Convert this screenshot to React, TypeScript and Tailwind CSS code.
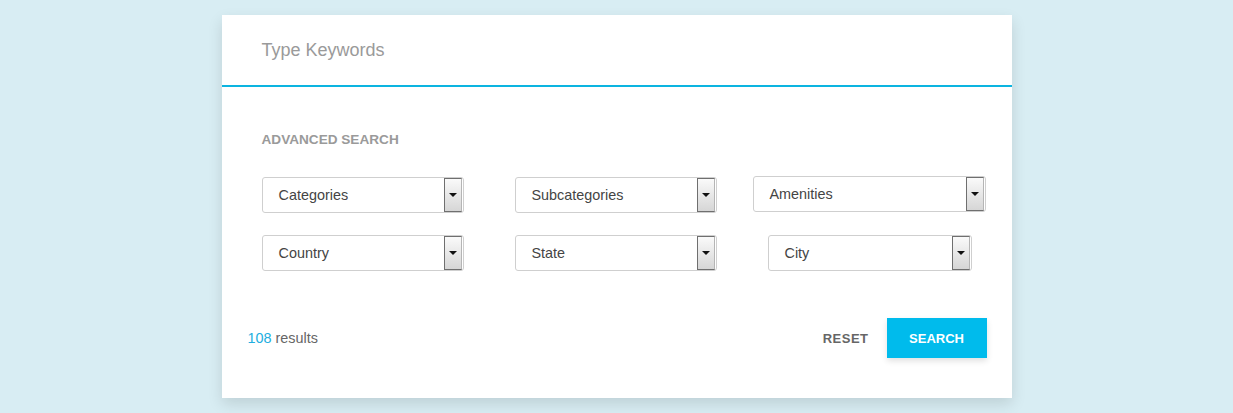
const font = { fontFamily: '"Liberation Sans", Arial, sans-serif' };

function Select({ label, width }: { label: string; width: string }) {
  return (
    <div
      className={`flex h-[36px] shrink-0 ${width} items-center justify-between rounded-[3px] border border-[#cfcfcf] bg-white pl-4 pr-px`}
    >
      <span className="text-[14.4px] text-[#444]">{label}</span>
      <span className="flex h-[34px] w-[18px] items-center justify-center border border-[#6f6f6f] border-r-[#b5b5b5] bg-gradient-to-b from-[#fafafa] to-[#d6d6d6]">
        <span className="h-0 w-0 border-x-[4px] border-t-[4px] border-x-transparent border-t-[#111]" />
      </span>
    </div>
  );
}

export default function App() {
  return (
    <div className="flex h-[413px] w-full justify-center bg-[#d8edf3] pt-[15px]" style={font}>
      <div className="flex h-[383px] w-[790px] flex-col bg-white shadow-[0_6px_14px_rgba(0,0,0,0.12)]">
        <div className="flex h-[72px] items-center border-b-2 border-[#0cb4e0] pl-10">
          <span className="text-[18px] text-[#9a9a9a]">Type Keywords</span>
        </div>

        <div className="px-10 pt-[43px]">
          <p className="text-[13.6px] font-bold text-[#9a9a9a]">ADVANCED SEARCH</p>

          <div className="mt-[27px] flex items-start">
            <Select label="Categories" width="w-[202px]" />
            <div className="ml-[51px] shrink-0">
              <Select label="Subcategories" width="w-[202px]" />
            </div>
            <div className="ml-[36px] -mt-px shrink-0">
              <Select label="Amenities" width="w-[233px]" />
            </div>
          </div>

          <div className="mt-[22px] flex items-start">
            <Select label="Country" width="w-[202px]" />
            <div className="ml-[51px] shrink-0">
              <Select label="State" width="w-[202px]" />
            </div>
            <div className="ml-[51px] shrink-0">
              <Select label="City" width="w-[204px]" />
            </div>
          </div>
        </div>

        <div className="mt-[47px] flex items-center justify-between pl-[26px] pr-[25px]">
          <p className="text-[14.4px] text-[#666]">
            <span className="text-[#22aee0]">108</span> results
          </p>
          <div className="flex items-center">
            <button className="mr-[18px] text-[13px] font-bold tracking-[0.5px] text-[#666]">RESET</button>
            <button className="h-[40px] w-[100px] bg-[#00bbec] text-[13px] font-bold text-white shadow-[0_3px_6px_rgba(0,0,0,0.12)]">
              SEARCH
            </button>
          </div>
        </div>
      </div>
    </div>
  );
}
